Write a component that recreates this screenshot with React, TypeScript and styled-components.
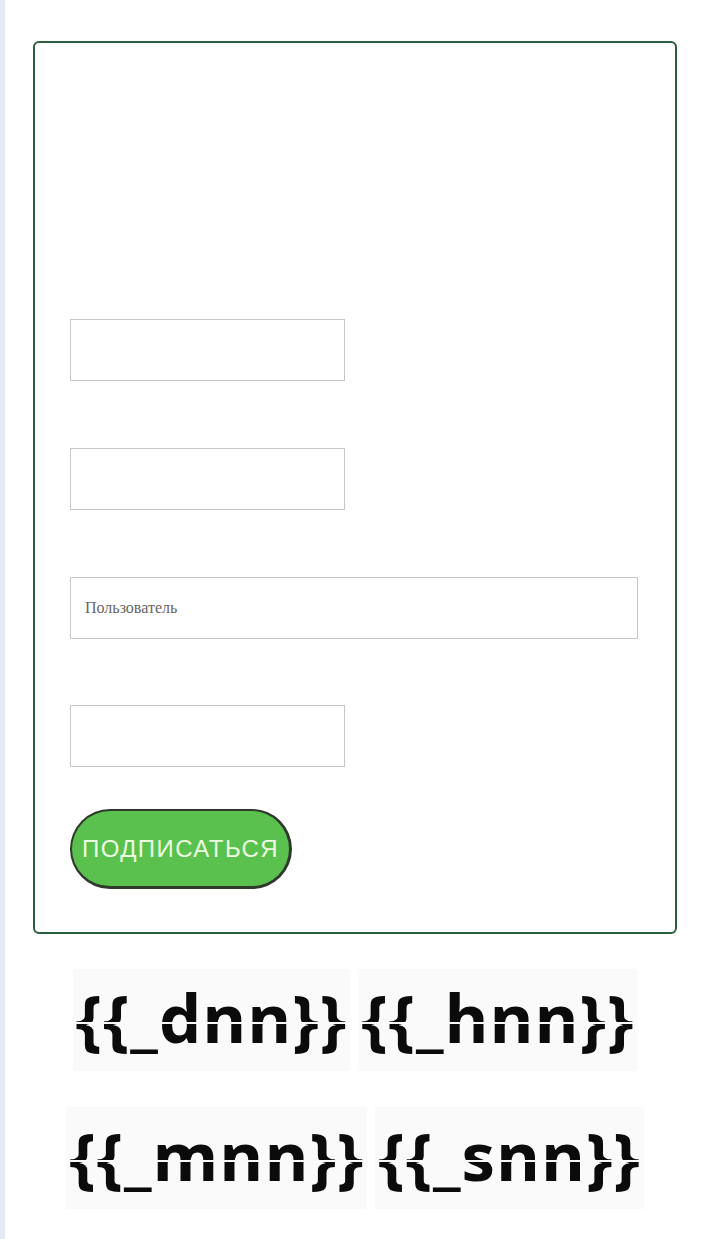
import React from 'react';
import styled, { createGlobalStyle } from 'styled-components';

const GlobalStyle = createGlobalStyle`
  html, body {
    margin: 0;
    padding: 0;
    background: #ffffff;
  }
`;

const Page = styled.div`
  min-height: 1239px;
  box-sizing: border-box;
  border-left: 5px solid #e3eaf4;
  padding: 41px 43px 0 28px;
`;

const Card = styled.form`
  border: 2px solid #2b5e3e;
  border-radius: 6px;
  padding: 276px 37px 43px 35px;
  display: flex;
  flex-direction: column;
  align-items: flex-start;
`;

const Field = styled.input<{ $wide?: boolean; $gap: number }>`
  box-sizing: border-box;
  width: ${(p) => (p.$wide ? '568px' : '275px')};
  height: 62px;
  margin-bottom: ${(p) => p.$gap}px;
  border: 1px solid #c6c6c6;
  background: #fff;
  padding: 0 14px;
  font-family: 'Liberation Serif', 'DejaVu Serif', serif;
  font-size: 16px;
  color: #333;
  outline: none;

  &::placeholder {
    color: #666;
  }
`;

const SubmitButton = styled.button`
  width: 222px;
  height: 80px;
  border-radius: 40px;
  border: 2px solid #2f3a2c;
  border-right-width: 3px;
  border-bottom-width: 3px;
  background: #5ac14f;
  color: #ecfde0;
  font-family: 'Liberation Sans', Arial, sans-serif;
  font-size: 24px;
  letter-spacing: 1.4px;
  padding: 0;
  cursor: pointer;
`;

const Timer = styled.div`
  display: flex;
  flex-direction: column;
  align-items: center;
  gap: 36px;
  padding-top: 35px;
`;

const TimerRow = styled.div`
  display: flex;
  justify-content: center;
  gap: 8px;
`;

const TimerItem = styled.div`
  position: relative;
  background: #fafafa;
  padding: 6px 3px 12px;
  font-family: 'Open Sans', 'DejaVu Sans', sans-serif;
  font-weight: 700;
  font-size: 67px;
  line-height: 84px;
  letter-spacing: 1px;
  color: #0b0b0b;

  &::after {
    content: '';
    position: absolute;
    left: 0;
    right: 0;
    top: 52%;
    height: 2px;
    background: #fafafa;
  }
`;

const rows = [
  ['{{_dnn}}', '{{_hnn}}'],
  ['{{_mnn}}', '{{_snn}}'],
];

const App = () => (
  <Page>
    <GlobalStyle />
    <Card onSubmit={(e) => e.preventDefault()}>
      <Field $gap={67} />
      <Field $gap={67} />
      <Field $wide $gap={66} placeholder="Пользователь" />
      <Field $gap={42} />
      <SubmitButton type="submit">ПОДПИСАТЬСЯ</SubmitButton>
    </Card>
    <Timer>
      {rows.map((row, i) => (
        <TimerRow key={i}>
          {row.map((item) => (
            <TimerItem key={item}>{item}</TimerItem>
          ))}
        </TimerRow>
      ))}
    </Timer>
  </Page>
);

export default App;
